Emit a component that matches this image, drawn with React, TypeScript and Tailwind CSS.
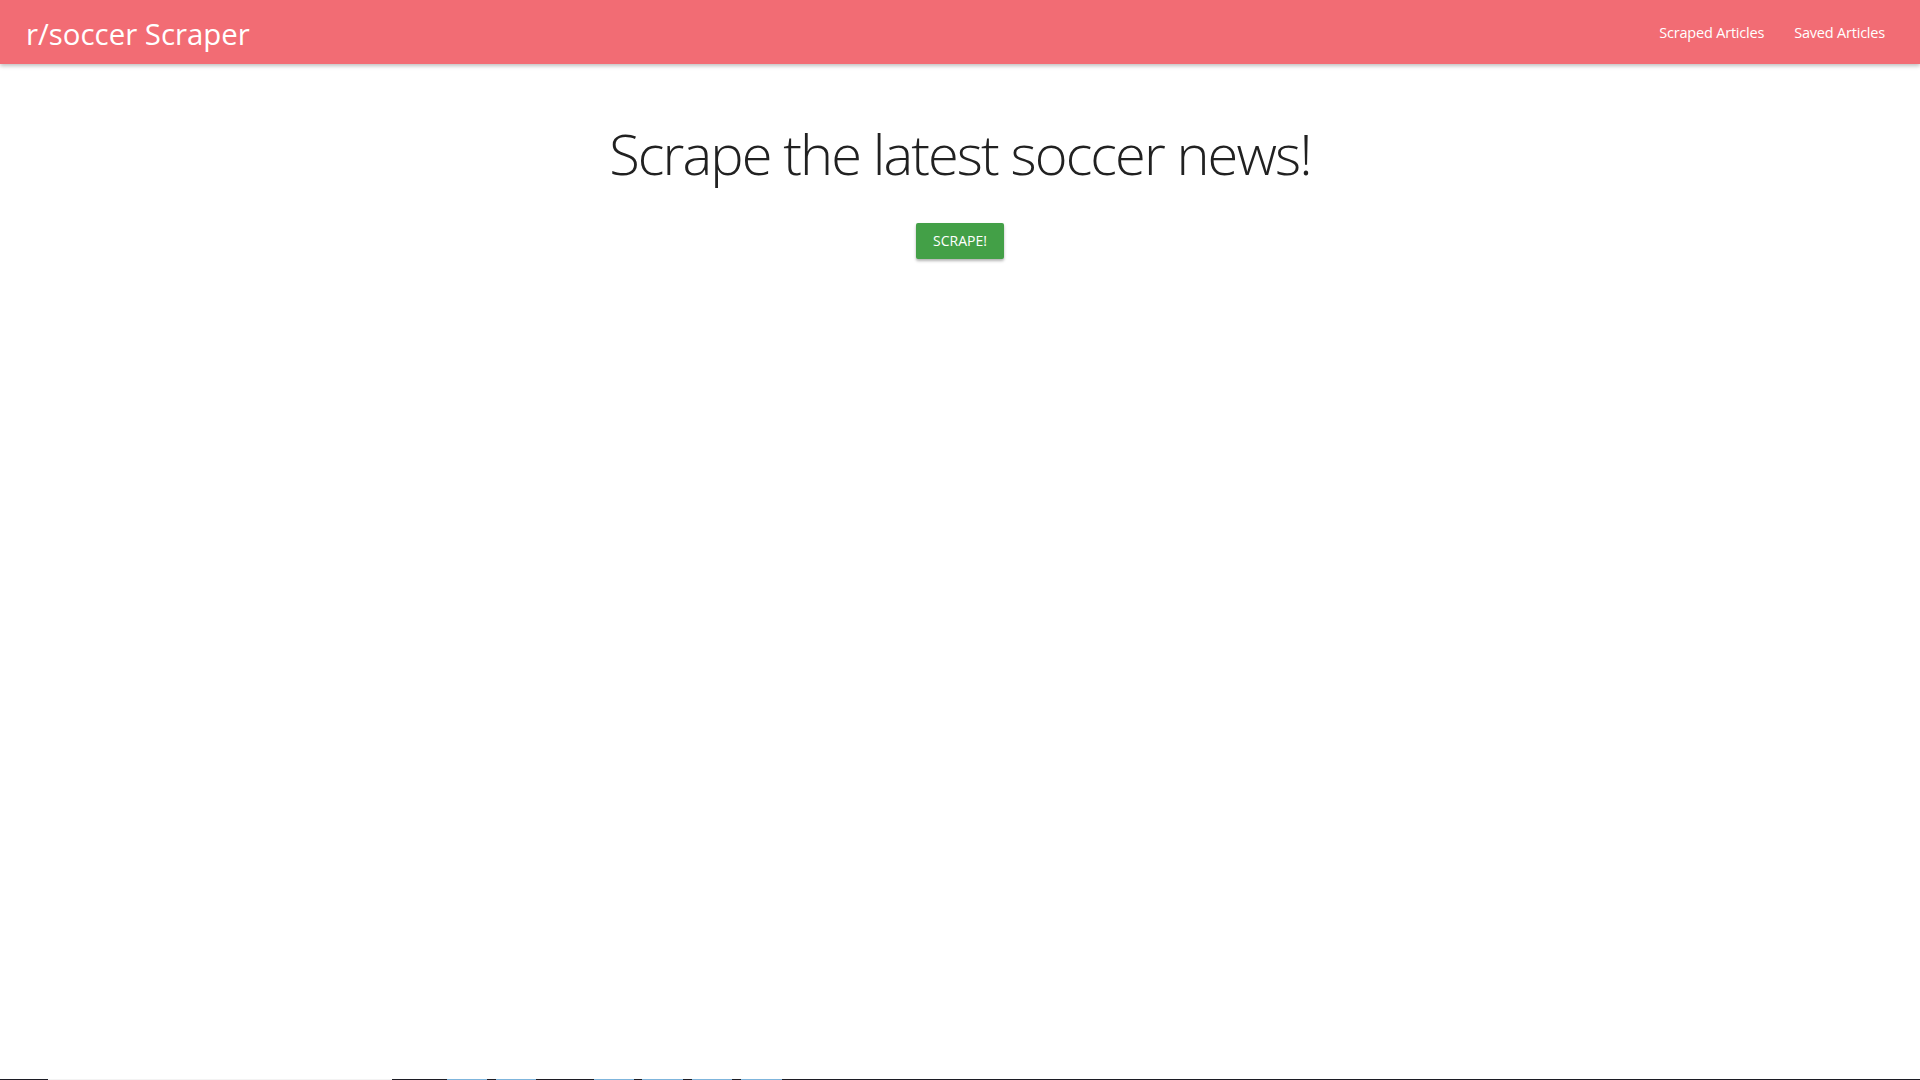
import React from "react";

const taskbar: [string, number][] = [
  ["#1c1c24", 48],
  ["#f3f3f3", 344],
  ["#1c1c24", 55],
  ["#7fb5dc", 40],
  ["#1c1c24", 9],
  ["#7fb5dc", 40],
  ["#1c1c24", 58],
  ["#7fb5dc", 40],
  ["#1c1c24", 8],
  ["#7fb5dc", 41],
  ["#1c1c24", 9],
  ["#7fb5dc", 40],
  ["#1c1c24", 9],
  ["#7fb5dc", 41],
];

const App = () => {
  const scrapeHandler = () => {
    alert("Scraping r/soccer...");
  };

  return (
    <div
      className="h-screen flex flex-col bg-white overflow-hidden"
      style={{ fontFamily: '"Open Sans", "Noto Sans", sans-serif' }}
    >
      <nav className="h-16 shrink-0 bg-[#f26c74] text-white flex items-center justify-between pl-[26px] pr-[20px] shadow-[0_2px_4px_rgba(0,0,0,0.25)] z-10">
        <a href="#" className="text-[29.4px] leading-none pt-[5px]">
          r/soccer Scraper
        </a>
        <ul className="flex h-full items-center text-[14.5px] pt-[2px]">
          <li>
            <a href="#" className="px-[15px] tracking-[-0.2px]">
              Scraped Articles
            </a>
          </li>
          <li>
            <a href="#" className="px-[15px] tracking-[-0.2px]">
              Saved Articles
            </a>
          </li>
        </ul>
      </nav>
      <main className="flex-1 flex flex-col items-center">
        <h1 className="mt-[59px] text-[56px] font-light leading-[1.1] text-[#212121] tracking-[-1.9px]">
          Scrape the latest soccer news!
        </h1>
        <button
          onClick={scrapeHandler}
          className="mt-[38px] h-9 px-[17px] rounded-[2px] bg-[#43a047] text-white text-[14px] uppercase shadow-[0_2px_3px_rgba(0,0,0,0.3)] hover:bg-[#4caf50]"
        >
          Scrape!
        </button>
      </main>
      <div className="h-px flex shrink-0 bg-[#1c1c24]">
        {taskbar.map(([color, width], i) => (
          <div key={i} style={{ backgroundColor: color, width }} />
        ))}
      </div>
    </div>
  );
};

export default App;
